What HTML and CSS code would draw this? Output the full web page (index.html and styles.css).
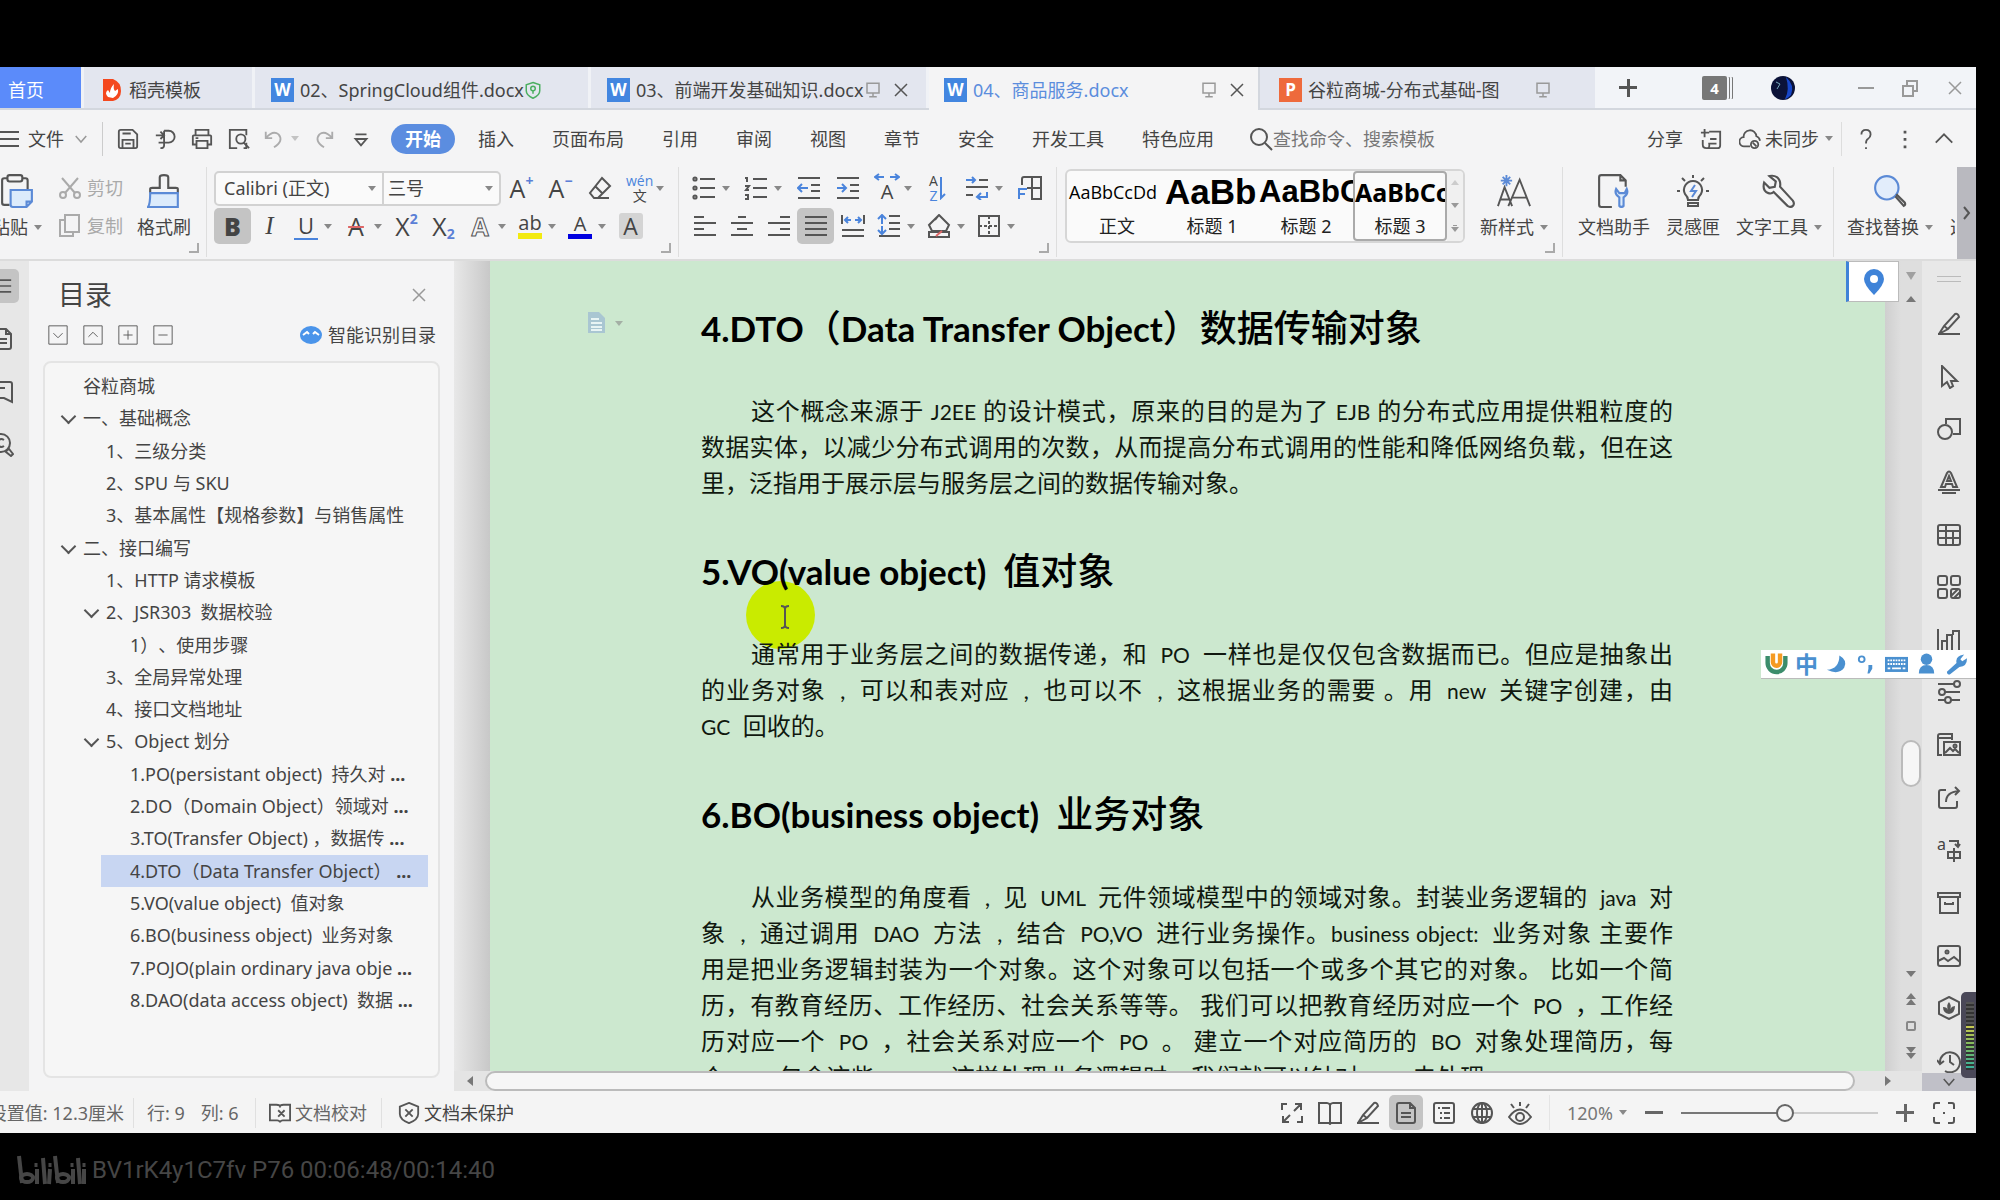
FILE: index.html
```html
<!DOCTYPE html>
<html lang="zh-CN">
<head>
<meta charset="utf-8">
<title>04、商品服务.docx</title>
<link rel="stylesheet" href="styles.css">
</head>
<body>
<svg class="defs" aria-hidden="true">
  <symbol id="menu" viewBox="0 0 24 24"><path d="M1 5h22M1 12h22M1 19h22"/></symbol>
  <symbol id="down" viewBox="0 0 24 24"><path d="M5 8l7 8 7-8"/></symbol>
  <symbol id="up" viewBox="0 0 24 24"><path d="M3 16l9-9 9 9"/></symbol>
  <symbol id="close" viewBox="0 0 24 24"><path d="M4 4l16 16M20 4L4 20"/></symbol>
  <symbol id="save" viewBox="0 0 24 24"><path d="M2 4q0-2 2-2h13l5 5v13q0 2-2 2H4q-2 0-2-2zM6 22v-9h12v9M6 6h9M9 17h6"/></symbol>
  <symbol id="export" viewBox="0 0 24 24"><path d="M2 8h8M7 4l4 4-4 4M11 3h5a6 6 0 0 1 0 13h-5v3q0 3-4 3M11 3v13M5 16h6"/></symbol>
  <symbol id="print" viewBox="0 0 24 24"><path d="M5 8V2h14v6M5 18H2V9q0-1 1-1h18q1 0 1 1v9h-3M6 14h12v8H6zM5 11h3"/></symbol>
  <symbol id="preview" viewBox="0 0 24 24"><path d="M10 22H2V2h18v6M20 16v6h-3"/><circle cx="14" cy="12" r="5"/><path d="M17 16l6 6"/></symbol>
  <symbol id="undo" viewBox="0 0 24 24"><path d="M3 4v7h7M3 11q8-9 14-4 6 7-5 14"/></symbol>
  <symbol id="redo" viewBox="0 0 24 24"><path d="M21 4v7h-7M21 11Q13 2 7 7q-6 7 5 14"/></symbol>
  <symbol id="more" viewBox="0 0 24 24"><path d="M6 7h12M6 12h12l-6 7z"/></symbol>
  <symbol id="search" viewBox="0 0 24 24"><circle cx="10" cy="10" r="8"/><path d="M16 16l7 7"/></symbol>
  <symbol id="comment" viewBox="0 0 24 24"><path d="M10 4h12v15q0 3-3 3H7q-4 0-4-4v-5M5 1v9M1 5h9M11 12h7M9 17h9M7 22q4 0 3-4"/></symbol>
  <symbol id="cloud" viewBox="0 0 24 24"><path d="M12 20H6a5 5 0 0 1-1-10 7 7 0 0 1 14-1q3 1 4 5"/><circle cx="17" cy="18" r="4"/><path d="M15 16l4 4"/></symbol>
  <symbol id="help" viewBox="0 0 24 24"><path d="M7 7q0-5 5-5t5 5q0 3-3 5-2 1-2 5M12 21v2"/></symbol>
  <symbol id="dots" viewBox="0 0 24 24"><path stroke-width="3" d="M12 3v3M12 11v3M12 19v3"/></symbol>
  <symbol id="screen" viewBox="0 0 24 24"><path d="M4 3h16v13H4zM12 16v5M7 21h10"/></symbol>
  <symbol id="shield" viewBox="0 0 24 24"><path d="M12 2l9 3v8q0 6-9 10-9-4-9-10V5z"/><circle cx="12" cy="10" r="3"/><path d="M12 13v4"/></symbol>
  <symbol id="shieldx" viewBox="0 0 24 24"><path d="M12 1l10 4v8q0 6-10 10-10-4-10-10V5zM8 8l8 8M16 8l-8 8"/></symbol>
  <symbol id="paste" viewBox="0 0 32 32"><path d="M9 29H4q-2 0-2-2V6q0-2 2-2h3M21 4h3q2 0 2 2v8"/><rect x="7" y="1" width="14" height="6" rx="2"/><path fill="#dcebfb" stroke="#5b8ad6" d="M10 15h20v11l-5 5H12q-2 0-2-2zM25 31v-5h5"/></symbol>
  <symbol id="cut" viewBox="0 0 24 24"><path d="M4 2l13 15M20 2L7 17"/><circle cx="5" cy="19" r="3"/><circle cx="19" cy="19" r="3"/></symbol>
  <symbol id="copy" viewBox="0 0 24 24"><path d="M7 1h14v17H7zM7 6H2v16h13v-4"/></symbol>
  <symbol id="brush" viewBox="0 0 32 32"><path d="M3 18v-4q0-1 2-1h7V3q0-2 4-2t4 2v10h7q2 0 2 1v4"/><path fill="#dcebfb" stroke="#5b8ad6" d="M3 18h26v13H1q2-3 2-13z"/></symbol>
  <symbol id="eraser" viewBox="0 0 24 24"><path d="M14 2l8 8-12 12H6l-4-5zM7 10l8 8M8 22h13"/></symbol>
  <symbol id="ul" viewBox="0 0 24 24"><path d="M8 3h15M8 12h15M8 21h15"/><circle cx="3" cy="3" r="1.6"/><circle cx="3" cy="12" r="1.6"/><circle cx="3" cy="21" r="1.6"/></symbol>
  <symbol id="ol" viewBox="0 0 24 24"><path d="M9 3h14M9 12h14M9 21h14M1 2h2v4M1 10h4l-3 4h3M1 19h3v4H1"/></symbol>
  <symbol id="outd" viewBox="0 0 24 24"><path d="M1 2h22M14 9h9M14 15h9M1 22h22"/><path stroke="#4a84dc" d="M1 12h10M5 8l-4 4 4 4"/></symbol>
  <symbol id="ind" viewBox="0 0 24 24"><path d="M1 2h22M14 9h9M14 15h9M1 22h22"/><path stroke="#4a84dc" d="M1 12h9M6 8l4 4-4 4"/></symbol>
  <symbol id="wrap" viewBox="0 0 24 24"><path d="M14 4h9M1 11h22M1 19h7"/><path stroke="#4a84dc" d="M1 4h9M7 1l3 3-3 3M22 16v5h-9M16 17l-4 4 4 3"/></symbol>
  <symbol id="fgrid" viewBox="0 0 24 24"><path d="M4 9V3q0-2 2-2h17v22H13M14 1v22M9 12h14"/><path stroke="#4a84dc" d="M1 23V13h8M1 18h6"/></symbol>
  <symbol id="al" viewBox="0 0 24 24"><path d="M1 3h10M1 9h22M1 15h10M1 21h22"/></symbol>
  <symbol id="ac" viewBox="0 0 24 24"><path d="M8 3h8M1 9h22M7 15h10M1 21h22"/></symbol>
  <symbol id="ar" viewBox="0 0 24 24"><path d="M13 3h10M1 9h22M13 15h10M1 21h22"/></symbol>
  <symbol id="aj" viewBox="0 0 24 24"><path d="M1 3h22M1 9h22M1 15h22M1 21h22"/></symbol>
  <symbol id="ad" viewBox="0 0 24 24"><path d="M1 1v9M23 1v9M1 16h22M1 22h22"/><path stroke="#4a84dc" d="M4 6h6M7 3L4 6l3 3M14 6h6M17 3l3 3-3 3"/></symbol>
  <symbol id="ls" viewBox="0 0 24 24"><path d="M12 2h11M12 9h11M12 15h11M2 22h21"/><path stroke="#4a84dc" d="M5 1v9M1 5l4-4 4 4M5 12v8M1 16l4 4 4-4"/></symbol>
  <symbol id="fill" viewBox="0 0 24 24"><path d="M12 1l10 10-3 6H5l-3-6zM12 1L8 6M2 18h20v5H2z"/><path stroke="#d66" d="M9 22l6-5"/></symbol>
  <symbol id="border" viewBox="0 0 24 24"><path d="M2 2h20v20H2z"/><path stroke-dasharray="3 2" d="M12 2v20M2 12h20"/></symbol>
  <symbol id="stretch" viewBox="0 0 26 8"><path stroke="#4a84dc" d="M1 4h9M5 1L1 4l4 3M16 4h9M21 1l4 3-4 3"/></symbol>
  <symbol id="newstyle" viewBox="0 0 36 34"><path d="M1 33L8 13l8 20M4 26h9M12 33L24 5l11 28M16 24h15"/><path stroke="#5b8ad6" d="M10 0v12M4 6h12M6 2l8 8M14 2l-8 8"/></symbol>
  <symbol id="dochelp" viewBox="0 0 32 32"><path d="M14 31H4q-2 0-2-2V3q0-2 2-2h18l5 5v6M22 1v5h5"/><path fill="#dcebfb" stroke="#5b8ad6" d="M18 14q-2 5 3 8v8q2 2 4 0v-8q5-3 3-8l-2 4h-5z"/></symbol>
  <symbol id="bulb" viewBox="0 0 34 34"><path d="M12 26q0-3-3-6a9 9 0 1 1 16 0q-3 3-3 6zM12 29h10v3H12zM17 1v3M6 4l3 3M28 4l-3 3M1 17h3M30 17h3"/><path stroke="#5b8ad6" d="M19 11l-4 6h5l-4 6"/></symbol>
  <symbol id="wrench" viewBox="0 0 32 32"><path d="M7 2l6 5-1 5-5 1-5-5q-2 8 4 10 3 1 5-1l13 13q3 2 5 0t0-5L17 12q1-6-3-9-3-2-7-1z"/></symbol>
  <symbol id="find" viewBox="0 0 32 32"><circle fill="#e2edfb" stroke="#5b8ad6" cx="13" cy="13" r="11"/><path d="M21 21l8 9q2-1 1-3l-8-8"/></symbol>
  <symbol id="page" viewBox="0 0 24 24"><path d="M3 4q0-2 2-2h11l5 5v13q0 2-2 2H5q-2 0-2-2zM16 2v5h5M7 12h10M7 16h10"/></symbol>
  <symbol id="mark" viewBox="0 0 24 24"><path d="M2 2h18q2 0 2 2v18l-8-4H2M5 8h10"/></symbol>
  <symbol id="finddoc" viewBox="0 0 24 24"><circle cx="11" cy="10" r="9"/><path d="M14 7q-3-2-5 0t0 6q2 2 5 0M17 17l2-1 4 5-2 2-5-4z"/></symbol>
  <symbol id="pencil" viewBox="0 0 24 24"><path d="M2 22l5-8L18 2q3-1 4 3L11 17zM7 14l4 3M1 22h22"/></symbol>
  <symbol id="arrow" viewBox="0 0 24 24"><path d="M5 1v20l5-4 3 6 3-2-2-5h6z"/></symbol>
  <symbol id="shapes" viewBox="0 0 24 24"><circle cx="8" cy="15" r="7"/><path d="M9 7V2h14v15h-7"/></symbol>
  <symbol id="art" viewBox="0 0 24 24"><path d="M4 17L10 3q2-3 4 0l6 14h-4l-1-3H9l-1 3zM10 11l2-5 2 5zM1 20h22M5 23h14"/></symbol>
  <symbol id="table" viewBox="0 0 24 24"><rect x="1" y="2" width="22" height="20" rx="2"/><path d="M1 8h22M1 15h22M9 2v20M16 8v14"/></symbol>
  <symbol id="apps" viewBox="0 0 24 24"><rect x="1" y="1" width="9" height="9" rx="2"/><rect x="14" y="1" width="9" height="9" rx="2"/><rect x="1" y="14" width="9" height="9" rx="2"/><rect x="14" y="14" width="9" height="9" rx="2"/><path d="M14 21l7-7M17 23l6-6"/></symbol>
  <symbol id="chart" viewBox="0 0 24 24"><path d="M1 1v22h22M5 23V13h5v10M10 13V7h5v16M16 7V3h6v20"/></symbol>
  <symbol id="sliders" viewBox="0 0 24 24"><path d="M1 4h17M7 12h16M1 20h7M14 20h9"/><circle cx="20" cy="4" r="3"/><circle cx="5" cy="12" r="3"/><circle cx="11" cy="20" r="3"/></symbol>
  <symbol id="gallery" viewBox="0 0 24 24"><path d="M5 22H1V3q0-2 2-2h12v6M1 5h14M7 9h16v13H7zM8 20l5-5 3 3 2-2 4 4"/><circle cx="18" cy="13" r="1.5"/></symbol>
  <symbol id="share" viewBox="0 0 24 24"><path d="M9 4H4q-2 0-2 2v14q0 2 2 2h14q2 0 2-2v-5M9 16q0-10 13-11M18 1l4 4-4 4"/></symbol>
  <symbol id="trans" viewBox="0 0 24 24"><path d="M12 3h9v5M18 6l3 3 2-3M11 14h12v6H11zM17 10v14"/></symbol>
  <symbol id="archive" viewBox="0 0 24 24"><path d="M1 2h22v4H1zM3 6v16h18V6M8 11v2h8v-2"/></symbol>
  <symbol id="image" viewBox="0 0 24 24"><rect x="1" y="2" width="22" height="20" rx="2"/><circle cx="10" cy="8" r="1.5"/><path d="M1 17l6-3 4 3 6-4 6 5"/></symbol>
  <symbol id="hex" viewBox="0 0 24 24"><path d="M12 1l10 5v12l-10 5-10-5V6z"/><path fill="#555" stroke="none" d="M12 6q3 4 1 7 2-3 5-3 0 7-6 8-6-1-6-7 4 0 5 3-2-5 1-8z"/></symbol>
  <symbol id="history" viewBox="0 0 24 24"><path d="M3 14a10 10 0 1 1 5 8M0 11l3 4 4-3M13 6v7l4 3"/></symbol>
  <symbol id="full" viewBox="0 0 24 24"><path d="M2 9V3h5M22 15v6h-5M15 3h6v6M3 15v6h6M14 10l7-7M10 14l-7 7"/></symbol>
  <symbol id="book" viewBox="0 0 24 24"><path d="M12 4q-1-2-3-2H1v20h10l1 1 1-1h10V2h-8q-2 0-3 2zM12 4v19"/></symbol>
  <symbol id="outline" viewBox="0 0 24 24"><rect x="2" y="2" width="20" height="20" rx="2"/><path d="M6 7h2M10 7h8M8 12h2M12 12h6M8 17h2M12 17h6"/></symbol>
  <symbol id="globe" viewBox="0 0 24 24"><circle cx="12" cy="12" r="10"/><ellipse cx="12" cy="12" rx="5" ry="10"/><path d="M3 8h18M3 16h18M12 2v20"/></symbol>
  <symbol id="eye" viewBox="0 0 24 24"><path d="M1 16q11-15 22 0-11 14-22 0zM12 1v4M3 3l3 4M21 3l-3 4"/><circle cx="12" cy="16" r="4"/></symbol>
  <symbol id="proof" viewBox="0 0 24 24"><path d="M12 3v3M12 4q-2-1-4-1H1v17h8q2 0 3 2M12 4q2-1 4-1h7v17h-8q-2 0-3 2M10 9l7 7M17 9l-7 7"/></symbol>
  <symbol id="focus" viewBox="0 0 24 24"><path d="M2 8V4q0-2 2-2h4M16 2h4q2 0 2 2v4M22 16v4q0 2-2 2h-4M8 22H4q-2 0-2-2v-4M11 12h2"/></symbol>
</svg>

<div class="app">
  <header class="tabs">
    <a class="tab home" href="#">首页</a>
    <a class="tab tpl" href="#"><svg class="flame" viewBox="0 0 20 24"><path d="M1 1h10q8 3 8 12 0 8-8 10H1z" fill="#f4481e"/><path d="M6 19q-4-4 0-7l2 3q0-5 4-9-1 5 1 7l3-2q1 6-5 9z" fill="#fff"/></svg>稻壳模板</a>
    <a class="tab t2" href="#"><b class="logo">W</b>02、SpringCloud组件.docx<svg class="ic sm green"><use href="#shield"/></svg></a>
    <a class="tab t3" href="#"><b class="logo">W</b>03、前端开发基础知识.docx<svg class="ic sm pale"><use href="#screen"/></svg><svg class="ic sm x"><use href="#close"/></svg></a>
    <a class="tab t4 active" href="#"><b class="logo">W</b>04、商品服务.docx<svg class="ic sm pale push"><use href="#screen"/></svg><svg class="ic sm x"><use href="#close"/></svg></a>
    <a class="tab t5" href="#"><b class="logo ppt">P</b>谷粒商城-分布式基础-图<svg class="ic sm pale gap"><use href="#screen"/></svg></a>
    <div class="winctl">
      <button class="plus" aria-label="新建"></button>
      <span class="badge">4</span>
      <svg class="avatar" viewBox="0 0 24 24"><circle cx="12" cy="12" r="12" fill="#0b1238"/><path d="M15 1q9 8 5 18-4 4-6 4 5-9 1-22z" fill="#1746c8"/><path d="M5 6l4 2-3 5" stroke="#7ab" fill="none"/></svg>
      <button class="min" aria-label="最小化"></button>
      <button aria-label="还原"><svg class="ic sm pale"><path d="M2 7h10v10H2zM6 7V2h10v10h-4"/></svg></button>
      <button aria-label="关闭"><svg class="ic sm pale"><use href="#close"/></svg></button>
    </div>
  </header>

  <nav class="menu">
    <button class="file"><svg class="ic"><use href="#menu"/></svg>文件<svg class="ic sm pale"><use href="#down"/></svg></button>
    <div class="quick">
      <button aria-label="保存"><svg class="ic"><use href="#save"/></svg></button>
      <button aria-label="输出"><svg class="ic"><use href="#export"/></svg></button>
      <button aria-label="打印"><svg class="ic"><use href="#print"/></svg></button>
      <button aria-label="预览"><svg class="ic"><use href="#preview"/></svg></button>
      <button class="dd off wide" aria-label="撤销"><svg class="ic"><use href="#undo"/></svg></button>
      <button class="off" aria-label="恢复"><svg class="ic"><use href="#redo"/></svg></button>
      <button aria-label="自定义"><svg class="ic"><use href="#more"/></svg></button>
    </div>
    <div class="cats">
      <a class="on" href="#">开始</a><a href="#">插入</a><a href="#">页面布局</a><a href="#">引用</a><a href="#">审阅</a><a href="#">视图</a><a href="#">章节</a><a href="#">安全</a><a href="#">开发工具</a><a href="#">特色应用</a>
    </div>
    <label class="search"><svg class="ic"><use href="#search"/></svg><input type="text" placeholder="查找命令、搜索模板" aria-label="查找命令"></label>
    <div class="share">
      <button>分享</button>
      <button aria-label="批注"><svg class="ic"><use href="#comment"/></svg></button>
      <button class="sync dd"><svg class="ic"><use href="#cloud"/></svg>未同步</button>
      <button aria-label="帮助"><svg class="ic"><use href="#help"/></svg></button>
      <button aria-label="更多"><svg class="ic"><use href="#dots"/></svg></button>
      <button aria-label="折叠"><svg class="ic"><use href="#up"/></svg></button>
    </div>
  </nav>

  <section class="ribbon">
    <div class="grp clip">
      <button class="big paste"><svg class="ic lg"><use href="#paste"/></svg><span class="dd">粘贴</span></button>
      <div class="rows cc">
        <button><svg class="ic"><use href="#cut"/></svg>剪切</button>
        <button><svg class="ic"><use href="#copy"/></svg>复制</button>
      </div>
      <button class="big"><svg class="ic lg"><use href="#brush"/></svg><span>格式刷</span></button>
    </div>
    <div class="grp font">
      <div class="rows">
        <div class="row g2">
          <div class="combo">
            <span class="dd name"><select aria-label="字体"><option>Calibri (正文)</option></select></span>
            <span class="dd size"><select aria-label="字号"><option>三号</option></select></span>
          </div>
          <button class="b"><span class="ch">A<sup>+</sup></span></button>
          <button class="b"><span class="ch">A<sup>−</sup></span></button>
          <button class="b" aria-label="清除"><svg class="ic"><use href="#eraser"/></svg></button>
          <button class="b dd"><span class="wen"><i>wén</i>文</span></button>
        </div>
        <div class="row">
          <button class="b sel"><b class="ch">B</b></button>
          <button class="b"><em class="ch it">I</em></button>
          <button class="b dd"><span class="ch ubar">U</span></button>
          <button class="b dd"><span class="ch strike">A</span></button>
          <button class="b"><span class="ch">X<sup>2</sup></span></button>
          <button class="b"><span class="ch">X<sub>2</sub></span></button>
          <button class="b dd"><span class="ch hollow">A</span></button>
          <button class="b dd"><span class="ch bar yel">ab</span></button>
          <button class="b dd"><span class="ch bar blu">A</span></button>
          <button class="b"><span class="ch shade">A</span></button>
        </div>
      </div>
    </div>
    <div class="grp para">
      <div class="rows">
        <div class="row g2">
          <button class="b dd" aria-label="项目符号"><svg class="ic"><use href="#ul"/></svg></button>
          <button class="b dd" aria-label="编号"><svg class="ic"><use href="#ol"/></svg></button>
          <button class="b" aria-label="减少缩进"><svg class="ic"><use href="#outd"/></svg></button>
          <button class="b" aria-label="增加缩进"><svg class="ic"><use href="#ind"/></svg></button>
          <button class="b dd"><span class="aw"><svg class="ic wide8"><use href="#stretch"/></svg>A</span></button>
          <button class="b"><span class="az"><i>A</i>Z</span><svg class="ic half" viewBox="14 0 10 24"><path stroke="#4a84dc" d="M17 1v21l4-4"/></svg></button>
          <button class="b dd" aria-label="换行"><svg class="ic"><use href="#wrap"/></svg></button>
          <button class="b" aria-label="制表"><svg class="ic"><use href="#fgrid"/></svg></button>
        </div>
        <div class="row">
          <button class="b" aria-label="左对齐"><svg class="ic"><use href="#al"/></svg></button>
          <button class="b" aria-label="居中"><svg class="ic"><use href="#ac"/></svg></button>
          <button class="b" aria-label="右对齐"><svg class="ic"><use href="#ar"/></svg></button>
          <button class="b sel" aria-label="两端对齐"><svg class="ic"><use href="#aj"/></svg></button>
          <button class="b" aria-label="分散对齐"><svg class="ic"><use href="#ad"/></svg></button>
          <button class="b dd" aria-label="行距"><svg class="ic"><use href="#ls"/></svg></button>
          <button class="b dd" aria-label="底纹"><svg class="ic"><use href="#fill"/></svg></button>
          <button class="b dd" aria-label="边框"><svg class="ic"><use href="#border"/></svg></button>
        </div>
      </div>
    </div>
    <div class="grp styles">
      <div class="gallery">
        <button class="st"><span class="s0">AaBbCcDd</span>正文</button>
        <button class="st"><span class="s1">AaBb</span>标题 1</button>
        <button class="st"><span class="s2">AaBbC</span>标题 2</button>
        <button class="st cur"><span class="s3">AaBbCc</span>标题 3</button>
        <div class="steps"><i class="tri u"></i><i class="tri"></i><i class="tri over"></i></div>
      </div>
      <button class="big"><svg class="ic lg"><use href="#newstyle"/></svg><span class="dd">新样式</span></button>
    </div>
    <div class="grp tools">
      <button class="big"><svg class="ic lg"><use href="#dochelp"/></svg><span>文档助手</span></button>
      <button class="big"><svg class="ic lg"><use href="#bulb"/></svg><span>灵感匣</span></button>
      <button class="big"><svg class="ic lg"><use href="#wrench"/></svg><span class="dd">文字工具</span></button>
    </div>
    <div class="grp last">
      <button class="big"><svg class="ic lg"><use href="#find"/></svg><span class="dd">查找替换</span></button>
      <button class="big cutoff"><span>选择</span></button>
    </div>
    <button class="scroller" aria-label="更多工具"><svg class="ic chev" viewBox="0 0 8 14"><path d="M1 1l5 6-5 6"/></svg></button>
  </section>

  <main class="work">
    <nav class="strip">
      <button class="sel" aria-label="目录"><svg class="ic"><use href="#menu"/></svg></button>
      <button aria-label="章节"><svg class="ic"><use href="#page"/></svg></button>
      <button aria-label="书签"><svg class="ic"><use href="#mark"/></svg></button>
      <button aria-label="查找"><svg class="ic"><use href="#finddoc"/></svg></button>
    </nav>
    <aside class="toc">
      <div class="tochead"><h2>目录</h2><button aria-label="关闭目录"><svg class="ic sm pale"><use href="#close"/></svg></button></div>
      <div class="toctools">
        <button aria-label="展开"><svg class="ic" viewBox="0 0 24 24"><path d="M2 2h20v20H2zM7 10l5 5 5-5"/></svg></button>
        <button aria-label="收起"><svg class="ic" viewBox="0 0 24 24"><path d="M2 2h20v20H2zM7 14l5-5 5 5"/></svg></button>
        <button aria-label="增加"><svg class="ic" viewBox="0 0 24 24"><path d="M2 2h20v20H2zM12 7v10M7 12h10"/></svg></button>
        <button aria-label="减少"><svg class="ic" viewBox="0 0 24 24"><path d="M2 2h20v20H2zM7 12h10"/></svg></button>
        <a href="#"><svg class="bot" viewBox="0 0 22 20"><ellipse cx="11" cy="10" rx="11" ry="9" fill="#4a94ea"/><path d="M3 10l4-3 2 2M13 9l2-2 4 3" stroke="#fff" stroke-width="2" fill="none"/></svg>智能识别目录</a>
      </div>
      <div class="tree"><ul>
        <li class="l1">谷粒商城</li>
        <li class="l1 op">一、基础概念</li>
        <li class="l2">1、三级分类</li>
        <li class="l2">2、SPU 与 SKU</li>
        <li class="l2">3、基本属性【规格参数】与销售属性</li>
        <li class="l1 op">二、接口编写</li>
        <li class="l2">1、HTTP 请求模板</li>
        <li class="l2 op">2、JSR303&nbsp; 数据校验</li>
        <li class="l3">1）、使用步骤</li>
        <li class="l2">3、全局异常处理</li>
        <li class="l2">4、接口文档地址</li>
        <li class="l2 op">5、Object 划分</li>
        <li class="l3">1.PO(persistant object)&nbsp; 持久对 <b>...</b></li>
        <li class="l3">2.DO（Domain Object）领域对 <b>...</b></li>
        <li class="l3">3.TO(Transfer Object) ，数据传 <b>...</b></li>
        <li class="l3 cur">4.DTO（Data Transfer Object） <b>...</b></li>
        <li class="l3">5.VO(value object)&nbsp; 值对象</li>
        <li class="l3">6.BO(business object)&nbsp; 业务对象</li>
        <li class="l3">7.POJO(plain ordinary java obje <b>...</b></li>
        <li class="l3">8.DAO(data access object)&nbsp; 数据 <b>...</b></li>
      </ul></div>
    </aside>

    <div class="view">
      <div class="canvas">
        <article class="page">
          <span class="spot"></span>
          <svg class="beam" viewBox="0 0 10 24"><path d="M1 1q4 0 4 3v16q0 3 4 3M9 1q-4 0-4 3M5 20q0 3-4 3"/></svg>
          <span class="note dd"><svg viewBox="0 0 20 24"><path d="M1 1h11l6 6v15H1z" fill="#a9c6d2"/><path d="M4 8h8M4 12h11M4 16h11M4 19h11" stroke="#e8f4f4" stroke-width="2"/></svg></span>
          <h3>4.DTO<i>（</i>Data Transfer Object<i>）数据传输对象</i></h3>
          <p><span class="ln first">这个概念来源于 <s>J2EE</s> 的设计模式，原来的目的是为了 <s>EJB</s> 的分布式应用提供粗粒度的</span><span class="ln">数据实体，以减少分布式调用的次数，从而提高分布式调用的性能和降低网络负载，但在这</span><span class="ln end">里，泛指用于展示层与服务层之间的数据传输对象。</span></p>
          <h3>5.VO(value object)&nbsp; <i>值对象</i></h3>
          <p><span class="ln first">通常用于业务层之间的数据传递，和 <s>&nbsp;PO&nbsp;</s> 一样也是仅仅包含数据而已。但应是抽象出</span><span class="ln">的业务对象&nbsp; ,&nbsp; 可以和表对应&nbsp; ,&nbsp; 也可以不&nbsp; ,&nbsp; 这根据业务的需要 。用 <s>&nbsp;new&nbsp;</s> 关键字创建，由</span><span class="ln end"><s>GC</s>&nbsp; 回收的。</span></p>
          <h3>6.BO(business object)&nbsp; <i>业务对象</i></h3>
          <p><span class="ln first">从业务模型的角度看&nbsp; ,&nbsp; 见 <s>&nbsp;UML&nbsp;</s> 元件领域模型中的领域对象。封装业务逻辑的 <s>&nbsp;java&nbsp;</s> 对</span><span class="ln">象&nbsp; ,&nbsp; 通过调用 <s>&nbsp;DAO&nbsp;</s> 方法&nbsp; ,&nbsp; 结合 <s>&nbsp;PO,VO&nbsp;</s> 进行业务操作。<s>business object:&nbsp;</s> 业务对象 主要作</span><span class="ln">用是把业务逻辑封装为一个对象。这个对象可以包括一个或多个其它的对象。 比如一个简</span><span class="ln">历，有教育经历、工作经历、社会关系等等。 我们可以把教育经历对应一个 <s>&nbsp;PO&nbsp;</s> ，工作经</span><span class="ln">历对应一个 <s>&nbsp;PO&nbsp;</s> ，社会关系对应一个 <s>&nbsp;PO&nbsp;</s> 。 建立一个对应简历的 <s>&nbsp;BO&nbsp;</s> 对象处理简历，每</span><span class="ln end">个 <s>&nbsp;BO&nbsp;</s> 包含这些 <s>&nbsp;PO&nbsp;</s> 。这样处理业务逻辑时，我们就可以针对 <s>&nbsp;BO&nbsp;</s> 去处理。</span></p>
        </article>
        <div class="vbar">
          <i class="tri top"></i><i class="tri u"></i>
          <span class="thumb"></span>
          <i class="tri"></i><span class="pair"><i class="tri u"></i><i class="tri u"></i></span><i class="sq"></i><span class="pair"><i class="tri"></i><i class="tri"></i></span>
        </div>
        <button class="pin" aria-label="定位"><svg viewBox="0 0 20 26"><path d="M10 0a10 10 0 0 1 10 10q0 6-10 16Q0 16 0 10A10 10 0 0 1 10 0z" fill="#3f83d8"/><circle cx="10" cy="10" r="4" fill="#fff"/></svg></button>
      </div>
      <div class="hbar"><i class="tri l"></i><span class="thumb"></span><i class="tri r"></i></div>
    </div>

    <nav class="rail">
      <span class="handle"></span>
      <div class="icons">
        <svg class="ic"><use href="#pencil"/></svg>
        <svg class="ic"><use href="#arrow"/></svg>
        <svg class="ic"><use href="#shapes"/></svg>
        <svg class="ic"><use href="#art"/></svg>
        <svg class="ic"><use href="#table"/></svg>
        <svg class="ic"><use href="#apps"/></svg>
        <svg class="ic"><use href="#chart"/></svg>
        <svg class="ic"><use href="#sliders"/></svg>
        <svg class="ic"><use href="#gallery"/></svg>
        <svg class="ic"><use href="#share"/></svg>
        <span class="tr"><svg class="ic"><use href="#trans"/></svg><span>a</span></span>
        <svg class="ic"><use href="#archive"/></svg>
        <svg class="ic"><use href="#image"/></svg>
        <svg class="ic"><use href="#hex"/></svg>
        <svg class="ic"><use href="#history"/></svg>
      </div>
      <button class="foot" aria-label="更多"><svg class="ic sm"><use href="#down"/></svg></button>
    </nav>
  </main>

  <footer class="status">
    <span class="cell c0">设置值: 12.3厘米</span>
    <span class="cell c1">行: 9<span>列: 6</span></span>
    <button class="cell c2"><svg class="ic"><use href="#proof"/></svg>文档校对</button>
    <button class="cell c3"><svg class="ic"><use href="#shieldx"/></svg>文档未保护</button>
    <div class="views">
      <button aria-label="全屏"><svg class="ic"><use href="#full"/></svg></button>
      <button aria-label="阅读"><svg class="ic"><use href="#book"/></svg></button>
      <button aria-label="写作"><svg class="ic"><use href="#pencil"/></svg></button>
      <button class="sel" aria-label="页面"><svg class="ic"><use href="#page"/></svg></button>
      <button aria-label="大纲"><svg class="ic"><use href="#outline"/></svg></button>
      <button aria-label="网页"><svg class="ic"><use href="#globe"/></svg></button>
      <button aria-label="护眼"><svg class="ic"><use href="#eye"/></svg></button>
    </div>
    <div class="zoom">
      <button class="pct dd">120%</button>
      <button class="zm" aria-label="缩小"></button>
      <input type="range" min="0" max="100" value="53" aria-label="缩放">
      <button class="zm zp" aria-label="放大"></button>
      <button aria-label="适应"><svg class="ic"><use href="#focus"/></svg></button>
    </div>
  </footer>

  <div class="ime">
    <svg viewBox="0 0 26 26"><path d="M3 4v8a10 10 0 0 0 20 0V4" fill="none" stroke="#3c8d6c" stroke-width="5"/><path d="M9 1v10a4 4 0 0 0 8 0V1" fill="none" stroke="#f59a23" stroke-width="5"/></svg>
    <b>中</b>
    <svg viewBox="0 0 24 24"><path d="M15 3q9 5 5 13-6 8-18 2 13-1 13-15z" fill="#4a90d0"/></svg>
    <svg viewBox="0 0 24 24"><circle cx="7" cy="7" r="3" fill="none" stroke="#4a90d0" stroke-width="2"/><path d="M14 13h4v4l-3 5h-2l1-5z" fill="#4a90d0"/></svg>
    <svg viewBox="0 0 26 24"><path d="M0 4h26v17H0z" fill="#4a90d0"/><path d="M3 8h20M3 12h20" stroke="#fff" stroke-width="2" stroke-dasharray="2 1"/><path d="M3 17h3M8 17h10M20 17h3" stroke="#fff" stroke-width="2"/></svg>
    <svg viewBox="0 0 24 24"><circle cx="12" cy="7" r="6" fill="#4a90d0"/><path d="M4 22q0-9 8-9t8 9z" fill="#4a90d0"/></svg>
    <svg viewBox="0 0 24 24"><path d="M2 20L12 11q-1-6 4-8l4-1-4 5 2 2 5-3q0 9-8 9L5 23q-3 0-3-3z" fill="#4a90d0"/></svg>
  </div>
  <div class="meter"><i></i></div>
</div>

<div class="mark">
  <svg class="bili" viewBox="0 0 70 32"><g fill="none" stroke="#464646" stroke-width="4"><path d="M3 2l3 27"/><ellipse cx="11" cy="24" rx="6" ry="4"/><path d="M21 15v15M27 4l2 26M34 15l-1 15M39 2l3 27"/><ellipse cx="47" cy="24" rx="6" ry="4"/><path d="M57 15v15M62 4l2 26M68 15v15"/></g><path d="M20 9v4M34 9v4M56 9v4M68 9v4" stroke="#464646" stroke-width="3"/></svg>
  <span>BV1rK4y1C7fv P76 00:06:48/00:14:40</span>
</div>
</body>
</html>
```
FILE: styles.css
```css
* { box-sizing: border-box; }
body {
  margin: 0; height: 100vh; background: #000; color: #444;
  display: flex; flex-direction: column;
  padding: 67px 24px 0 0; overflow: hidden;
  font: 18px/24px "Noto Sans", "Noto Sans CJK SC", sans-serif;
}
button { border: 0; background: none; padding: 0; margin: 0; font: inherit; color: inherit; display: flex; align-items: center; justify-content: center; white-space: nowrap; flex-shrink: 0; }
a { color: inherit; text-decoration: none; }
.defs { position: absolute; width: 0; height: 0; }
.ic { width: 24px; height: 24px; flex-shrink: 0; fill: none; stroke: #555; stroke-width: 2; }
.ic.sm { width: 18px; height: 18px; }
.ic.lg { width: 34px; height: 34px; }
.ic.pale { stroke: #999; }
.green { stroke: #4caf61; }
.dd::after { content: ""; border: 4px solid transparent; border-top: 5px solid #888; border-bottom: 0; margin-left: 6px; flex-shrink: 0; }
.sel { background: #c4c4c4; border-radius: 5px; }
.tri { border: 5px solid transparent; border-top: 6px solid #777; border-bottom: 0; flex-shrink: 0; }
.tri.u { border-top: 0; border-bottom: 6px solid #777; }

.app { flex: 1; min-height: 0; position: relative; display: flex; flex-direction: column; background: #f4f4f5; overflow: hidden; }

.tabs { display: flex; height: 43px; flex-shrink: 0; background: #f2f4f8; border-bottom: 2px solid #d3d7de; }
.tab { display: flex; align-items: center; background: #e3e6ef; border-right: 3px solid #f0f2f6; padding: 5px 0 0 16px; white-space: nowrap; flex-shrink: 0; overflow: hidden; }
.home { width: 84px; background: #5b8bfa; color: #fff; padding-left: 8px; }
.tpl { width: 171px; padding-left: 18px; }
.t2 { width: 336px; }
.t3 { width: 338px; }
.t4 { width: 331px; }
.t5 { width: 335px; border: 0; padding-left: 19px; }
.active { background: #f4f4f5; color: #5b8ddd; height: 43px; border-right: 2px solid #d3d7de; padding: 3px 12px 0 15px; }
.flame { width: 20px; height: 24px; margin-right: 7px; }
.logo { width: 23px; height: 24px; margin-right: 6px; background: #4286e0; color: #fff; font: 700 17px/24px "Open Sans", sans-serif; text-align: center; }
.ppt { background: #ee6a3c; }
.x { margin-left: 10px; }
.push { margin-left: auto; }
.gap { margin-left: 34px; }
.winctl { flex: 1; display: flex; align-items: center; justify-content: flex-end; gap: 27px; padding-right: 12px; }
.winctl button { width: 18px; height: 18px; }
.winctl .plus { margin-right: 38px; background: linear-gradient(#555, #555) center / 18px 3px no-repeat, linear-gradient(#555, #555) center / 3px 18px no-repeat; }
.badge { width: 25px; height: 24px; background: #777; color: #fff; border-radius: 2px; font: 700 15px/24px "Noto Sans", sans-serif; text-align: center; box-shadow: 3px 0 0 -1px #f2f4f8, 4px 0 0 -1px #777, 6px 0 0 -1px #f2f4f8, 7px 0 0 -1px #777; margin-right: 17px; }
.avatar { width: 24px; height: 24px; margin-right: 36px; }
.winctl .min { width: 16px; height: 2px; background: #999; }

.menu { display: flex; align-items: center; height: 56px; flex-shrink: 0; padding-top: 1px; }
.file { gap: 8px; margin-left: -4px; padding-right: 12px; border-right: 1px solid #ccc; height: 34px; }
.quick { display: flex; align-items: center; gap: 2px; padding-left: 7px; }
.quick button { width: 35px; }
.quick .wide { width: 46px; }
.quick .ic, .share .ic { width: 22px; height: 22px; }
.off { opacity: .45; }
.cats { display: flex; align-items: center; gap: 38px; padding-left: 13px; }
.cats a { white-space: nowrap; }
.cats .on { background: #5b8de0; color: #fff; font-weight: 700; border-radius: 15px; line-height: 30px; padding: 0 14px; margin-right: -15px; }
.search { display: flex; align-items: center; margin-left: 35px; flex: 1; min-width: 0; }
.search input { border: 0; background: none; font: inherit; width: 180px; padding: 0; outline: 0; }
.search input::placeholder { color: #777; opacity: 1; }
.share { display: flex; align-items: center; gap: 17px; padding-right: 21px; }
.sync { gap: 4px; border-right: 1px solid #ddd; padding-right: 8px; margin-right: -4px; height: 34px; }
.sync::after { margin-left: 2px; }

.ribbon { display: flex; height: 95px; flex-shrink: 0; border-bottom: 2px solid #dcdcdc; overflow: hidden; padding-top: 1px; }
.grp { display: flex; height: 90px; border-right: 1px solid #dedede; padding-top: 2px; position: relative; flex-shrink: 0; }
.grp:not(.tools):not(.last)::after { content: ""; position: absolute; right: 7px; bottom: 4px; width: 8px; height: 8px; border: solid #aaa; border-width: 0 2px 2px 0; }
.big { flex-direction: column; justify-content: flex-start; gap: 7px; padding-top: 5px; }
.big span { display: flex; align-items: center; line-height: 24px; }
.clip { width: 207px; }
.paste { margin-left: -8px; width: 50px; }
.cc { color: #aaa; margin: 0 14px 0 16px; }
.cc .ic { stroke: #aaa; }
.cc button { gap: 5px; height: 38px; }
.rows { display: flex; flex-direction: column; }
.row { display: flex; height: 38px; align-items: center; }
.g2 { gap: 2px; }
.font { padding-left: 7px; width: 472px; }
.para { padding-left: 7px; width: 378px; }
.b { width: 37px; height: 36px; }
.b.dd { width: 50px; justify-content: flex-start; padding-left: 6px; }
.b.dd::after { margin-left: auto; margin-right: 6px; }
.combo { display: flex; height: 35px; width: 287px; border: 2px solid #d2d2d2; border-radius: 5px; background: #fafafa; }
.combo .dd { display: flex; align-items: center; padding-right: 6px; }
.combo select { appearance: none; border: 0; background: none; font: inherit; color: inherit; padding: 0 0 0 8px; flex: 1; outline: 0; min-width: 0; }
.name { width: 168px; border-right: 2px solid #d2d2d2; }
.size { flex: 1; }
.combo .size select { padding-left: 4px; }
.ch { font: 25px/28px "Open Sans", sans-serif; position: relative; white-space: nowrap; min-width: 24px; text-align: center; }
.ch sup, .ch sub { font: 700 14px/10px "Open Sans", sans-serif; color: #5b7fd6; }
.ch sup { vertical-align: 12px; }
.ch sub { vertical-align: -3px; }
b.ch { font-weight: 800; }
.it { font-family: "Liberation Serif", serif; font-style: italic; }
.ubar { border-bottom: 2px solid #4a84dc; line-height: 26px; font-size: 22px; }
.strike { text-decoration: line-through #d66 2px; }
.hollow { color: #f4f4f5; -webkit-text-stroke: 1px #555; font-weight: 700; }
.bar { font-size: 20px; line-height: 20px; }
.yel { border-bottom: 6px solid #f2ea10; }
.blu { border-bottom: 5px solid #0000e0; }
.shade { background: #d4d4d4; line-height: 26px; font-size: 23px; border-radius: 3px; }
.aw { display: flex; flex-direction: column; align-items: center; font: 20px/22px "Open Sans", sans-serif; }
.wide8 { width: 26px; height: 8px; }
.az, .wen { display: flex; flex-direction: column; font: 14px/15px "Open Sans", "Noto Sans CJK SC", sans-serif; color: #4a84dc; }
.az i { font-style: normal; color: #444; }
.wen { color: #444; align-items: center; }
.wen i { font-style: normal; color: #4a84dc; }
.half { width: 10px; }
.styles { padding-left: 8px; width: 506px; }
.gallery { display: flex; width: 400px; height: 74px; border: 2px solid #d6d6d6; border-radius: 6px; background: #fafafa; overflow: hidden; margin-right: 15px; }
.st { width: 94px; flex-direction: column; justify-content: flex-end; overflow: hidden; line-height: 26px; color: #222; align-items: stretch; padding-bottom: 2px; }
.st span { color: #000; text-align: left; }
.st .s0 { font: 18px/42px "Open Sans", sans-serif; }
.st:first-child { width: 98px; padding-left: 2px; }
.st .s1 { font: 700 35px/42px "Liberation Sans", sans-serif; }
.st .s2 { font: 700 31px/42px "Liberation Sans", sans-serif; }
.st .s3 { font: 700 25px/42px "Noto Sans", sans-serif; }
.cur.st { border: 2px solid #aaa; border-radius: 4px; padding-bottom: 0; }
.steps { flex: 1; display: flex; flex-direction: column; align-items: center; justify-content: space-around; background: #f0f0f0; }
.steps .tri { border-width: 5px 4px 0; border-top-color: #999; }
.steps .tri.u { border-width: 0 4px 5px; border-bottom-color: #ccc; }
.steps .over { box-shadow: 0 -4px 0 -2px #999; }
.tools { padding: 2px 16px 0 15px; gap: 16px; width: 271px; }
.last { padding-left: 16px; gap: 20px; border: 0; flex: 1; min-width: 0; overflow: hidden; }
.last .big:first-child { width: 80px; }
.cutoff { padding-top: 46px; width: 8px; overflow: hidden; align-items: flex-start; }
.scroller { width: 19px; margin-left: 2px; background: #b9b9bf; }
.chev { width: 8px; height: 14px; }

.work { display: flex; flex: 1; min-height: 0; }
.strip { width: 29px; background: #e7e7e7; display: flex; flex-direction: column; gap: 19px; padding-top: 8px; overflow: hidden; flex-shrink: 0; }
.strip button { width: 34px; height: 34px; margin-left: -15px; }
.strip .sel .ic { width: 20px; }
.toc { width: 425px; flex-shrink: 0; padding: 15px 14px 13px; display: flex; flex-direction: column; }
.tochead { display: flex; align-items: center; justify-content: space-between; padding: 0 12px 0 15px; }
.tochead h2 { margin: 0; font-size: 27px; font-weight: 400; line-height: 38px; }
.toctools { display: flex; align-items: center; gap: 13px; padding: 0 4px 6px; height: 47px; }
.toctools .ic { width: 22px; height: 22px; stroke-width: 1; }
.toctools a { margin-left: auto; display: flex; align-items: center; gap: 6px; }
.bot { width: 22px; height: 20px; }
.tree { flex: 1; min-height: 0; border: 2px solid #e4e4e4; border-radius: 8px; background: #f6f6f6; padding: 7px 10px 0 0; }
.tree ul { list-style: none; margin: 0; padding: 0; height: 646px; display: flex; flex-direction: column; justify-content: space-between; }
.tree li { line-height: 32px; height: 32px; white-space: nowrap; position: relative; }
.l1 { padding-left: 38px; }
.l2 { padding-left: 61px; }
.l3 { padding-left: 29px; margin-left: 56px; text-spacing-trim: space-all; }
.tree .cur { background: #c8d6f2; }
.op::before { content: ""; position: absolute; width: 9px; height: 9px; margin: 9px 0 0 -20px; border: solid #555; border-width: 0 2px 2px 0; transform: rotate(45deg); }

.view { flex: 1; min-width: 0; display: flex; flex-direction: column; }
.canvas { flex: 1; min-height: 0; display: flex; position: relative; padding-left: 36px; background: linear-gradient(90deg, #e8e8e8, #c8c8c8 36px, #dcdcdc 60px); }
.page { flex: 1; min-width: 0; background: #cce8cf; padding: 45px 212px 0 211px; overflow: hidden; position: relative; color: #10180f; }
.page h3 { position: relative; margin: 0 0 43px; font: 700 35px/44px Lato, "Noto Sans CJK SC", sans-serif; color: #000; white-space: nowrap; height: 44px; }
.page h3 i { font-style: normal; font-weight: 500; font-size: 37px; line-height: 40px; }
.page p { position: relative; margin: 0 0 48px; font: 24px/36px Lato, "Noto Sans CJK SC", sans-serif; }
.ln { display: block; height: 36px; white-space: nowrap; text-align: justify; text-align-last: justify; }
.first { padding-left: 50px; }
.ln.end { text-align-last: left; }
.ln s { text-decoration: none; font-size: 21px; }
.note { position: absolute; left: 97px; top: 50px; display: flex; align-items: center; gap: 2px; }
.note svg { width: 20px; height: 24px; }
.note::after { opacity: .6; }
.spot { position: absolute; left: 256px; top: 320px; width: 69px; height: 68px; border-radius: 50%; background: #c9eb00; }
.beam { position: absolute; left: 290px; top: 344px; width: 10px; height: 24px; fill: none; stroke: #555; stroke-width: 2; }
.vbar { width: 37px; background: linear-gradient(90deg, #cfcfcf, #dedede 16px); display: flex; flex-direction: column; align-items: center; padding: 11px 0 12px 15px; gap: 16px; }
.vbar .top { opacity: .6; border-top-width: 8px; }
.vbar .thumb { width: 20px; height: 47px; margin-top: auto; margin-bottom: 168px; }
.thumb { background: #f6f6f6; border: 2px solid #bbb; border-radius: 10px; flex-shrink: 0; }
.pair { display: flex; flex-direction: column; }
.sq { width: 10px; height: 10px; border: 2px solid #888; border-radius: 2px; }
.pin { position: absolute; right: 23px; top: 0; width: 53px; height: 41px; background: #fff; border: 1px solid #bbb; border-left: 3px solid #3f83d8; }
.pin svg { width: 20px; height: 26px; }
.hbar { height: 20px; display: flex; align-items: center; gap: 12px; padding: 0 31px 0 13px; background: #e4e4e4; }
.hbar .thumb { flex: 1; height: 20px; }
.tri.l { border: 5px solid transparent; border-right: 6px solid #777; border-left: 0; }
.tri.r { border: 5px solid transparent; border-left: 6px solid #777; border-right: 0; margin-left: 18px; }
.rail { width: 54px; background: #e8e8e8; display: flex; flex-direction: column; align-items: center; flex-shrink: 0; }
.handle { width: 24px; height: 6px; border: solid #bbb; border-width: 1px 0; margin: 15px 0 30px; }
.icons { flex: 1; display: flex; flex-direction: column; justify-content: space-between; }
.icons .ic { display: block; }
.tr { position: relative; }
.tr span { position: absolute; left: 0; top: -6px; font-size: 16px; }
.foot { width: 54px; height: 18px; background: #c0c0c8; }

.status { height: 42px; flex-shrink: 0; display: flex; align-items: center; background: #f4f4f4; color: #666; padding-top: 1px; }
.cell { height: 30px; line-height: 30px; border-right: 1px solid #e0e0e0; white-space: nowrap; }
.c0 { width: 134px; padding-right: 9px; display: flex; justify-content: flex-end; overflow: hidden; flex-shrink: 0; }
.c1 { width: 122px; padding-left: 13px; display: flex; gap: 16px; }
.c2, .c3 { padding: 0 14px 0 13px; gap: 4px; }
.c3 { border: 0; padding-left: 16px; color: #444; }
.status .cell .ic { width: 22px; height: 22px; }
.views { margin-left: auto; display: flex; gap: 4px; padding-right: 12px; border-right: 1px solid #e4e4e4; }
.views button { width: 34px; height: 35px; }
.zoom { display: flex; align-items: center; padding: 0 20px 0 17px; width: 426px; gap: 18px; }
.zoom .pct { color: #777; }
.zm { width: 18px; height: 18px; background: linear-gradient(#666, #666) center / 18px 3px no-repeat; }
.zp { background: linear-gradient(#666, #666) center / 18px 3px no-repeat, linear-gradient(#666, #666) center / 3px 18px no-repeat; }
.zoom input { flex: 1; min-width: 0; margin: 0; appearance: none; height: 20px; background: linear-gradient(90deg, #777 50%, #ccc 50%) center / 100% 2px no-repeat; }
.zoom input::-webkit-slider-thumb { appearance: none; width: 18px; height: 18px; border-radius: 50%; border: 2px solid #666; background: #f4f4f4; }

.ime { position: absolute; right: 0; top: 583px; width: 215px; height: 29px; background: #fff; border-bottom: 1px solid #bbb; display: flex; align-items: center; gap: 7px; padding-left: 4px; }
.ime svg { width: 23px; height: 24px; }
.ime b { color: #4a90d0; font-size: 23px; }
.meter { position: absolute; right: 0; top: 925px; width: 15px; height: 86px; background: #4a4858; border-radius: 5px 0 0 5px; padding: 10px 2px 8px 5px; }
.meter i { display: block; height: 68px; background: repeating-linear-gradient(#0000 0 2px, #333 2px 4px), linear-gradient(#555 35%, #c8c850 35%, #7bb860 65%, #35b0a0); }

.mark { height: 67px; flex-shrink: 0; display: flex; align-items: center; gap: 6px; padding: 6px 0 0 16px; color: #464646; font: 24px/28px Roboto, sans-serif; }
.bili { width: 70px; height: 32px; }
```
